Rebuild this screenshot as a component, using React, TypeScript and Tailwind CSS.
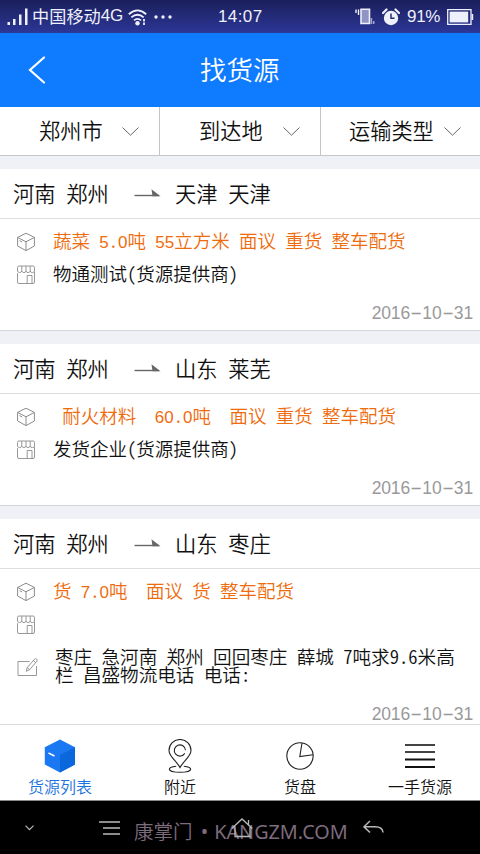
import type { ReactNode } from 'react';

type Shipment = {
  from: string;
  to: string;
  goods: string;
  company: string;
  note?: string;
  date: string;
};

const filters = [
  { label: '郑州市', className: 'w-[160px] pl-[39px] gap-[19px] border-r' },
  { label: '到达地', className: 'w-[161px] pl-[39px] gap-[20px] border-r' },
  { label: '运输类型', className: 'flex-1 pl-[28px] gap-[10px]' },
];

const shipments: Shipment[] = [
  {
    from: '河南 郑州',
    to: '天津 天津',
    goods: '蔬菜 5.0吨 55立方米 面议 重货 整车配货',
    company: '物通测试(货源提供商)',
    date: '2016-10-31',
  },
  {
    from: '河南 郑州',
    to: '山东 莱芜',
    goods: ' 耐火材料  60.0吨  面议 重货 整车配货',
    company: '发货企业(货源提供商)',
    date: '2016-10-31',
  },
  {
    from: '河南 郑州',
    to: '山东 枣庄',
    goods: '货 7.0吨  面议 货 整车配货',
    company: '',
    note: '枣庄 急河南 郑州 回回枣庄 薛城 7吨求9.6米高\n栏 昌盛物流电话 电话:',
    date: '2016-10-31',
  },
];

const BoxIcon = () => (
  <svg width="20" height="20" viewBox="0 0 20 20" fill="none" stroke="#8c8c8c" strokeWidth="1" strokeLinejoin="round">
    <path d="M10 1.2 18.4 5.4V14L10 18.6 1.6 14V5.4ZM1.6 5.4 10 9.8 18.4 5.4M10 9.8V18.6" />
    <path d="M3.6 8.6 6.2 10" />
  </svg>
);

const ShopIcon = () => (
  <svg width="20" height="20" viewBox="0 0 20 20" fill="none" stroke="#8c8c8c" strokeWidth="0.9">
    <path d="M1.5 8.2V17Q1.5 18.5 3 18.5H17Q18.5 18.5 18.5 17V7" />
    <path d="M1.5 6V2.5Q1.5 1 3 1H17Q18.5 1 18.5 2.5V6" />
    <path d="M1.5 6Q2 7.6 3.6 7.6T5.8 6Q6.2 7.6 7.9 7.6T10 6Q10.4 7.6 12.1 7.6T14.2 6Q14.6 7.6 16.4 7.6T18.5 6M5.8 6V1M10 6V1M14.2 6V1" />
    <path d="M11.2 18.5V10.5H16V18.5" />
  </svg>
);

const EditIcon = () => (
  <svg width="22" height="20" viewBox="0 0 22 20" fill="none" stroke="#8c8c8c" strokeWidth="0.9" strokeLinejoin="round">
    <path d="M12.5 4.5H1V18.5H19.5V9" />
    <path d="M9.3 14.3 10.2 10.6 17.7 2Q18.6 1.1 19.6 2T20 4.2L12.7 12.6ZM16.4 3.5 18.8 5.7M10.2 10.6 12.7 12.6" />
  </svg>
);

const ArrowIcon = () => (
  <svg className="-mt-[2px]" width="27" height="10" viewBox="0 0 27 10" fill="none">
    <path d="M0.5 7.5H25" stroke="#666" strokeWidth="1.4" />
    <path d="M17.5 1.2 26.5 8.2H18.5Z" fill="#666" />
  </svg>
);

const StatusBar = () => (
  <div className="flex h-[33px] shrink-0 items-center bg-linear-to-b from-[#1b1f5c] to-[#2c3797] pl-[7px] font-normal text-[#eef0fb]">
    <svg width="21" height="17" viewBox="0 0 21 17" fill="currentColor">
      <path d="M0.5 14h2.5v3H0.5zM6 11h2.5v6H6zM12 6.5h2.5V17H12zM18 0.5h2.5V17H18z" />
    </svg>
    <span className="ml-[4px] flex w-[91px] items-center whitespace-nowrap pb-[2px] text-[17.2px] leading-none">
      中国移动
      <span className="font-['Liberation_Sans',sans-serif] text-[17px] tracking-[-0.3px]">4G</span>
    </span>
    <svg className="ml-[5px] mt-[1px]" width="19" height="17" viewBox="0 0 19 17" fill="none" stroke="currentColor" strokeWidth="1.8">
      <path d="M0.8 5.2Q9.5-2.4 18.2 5.2M3.3 8.4Q9.5 3 15.7 8.4M6 11.4Q9.5 8.4 13 11.4" />
      <circle cx="9.5" cy="14.2" r="2.2" fill="currentColor" stroke="none" />
      <path d="M16 10v2.4M16 13.6V16" />
    </svg>
    <svg className="ml-[7px]" width="18" height="4" viewBox="0 0 18 4" fill="currentColor">
      <circle cx="2" cy="2" r="1.7" />
      <circle cx="9" cy="2" r="1.7" />
      <circle cx="16" cy="2" r="1.7" />
    </svg>
    <span className="ml-[46px] w-[46px] font-['Liberation_Sans',sans-serif] text-[17px] leading-none tracking-[0.4px]">14:07</span>
    <svg className="ml-[91px]" width="20" height="17" viewBox="0 0 20 17" fill="none" stroke="currentColor">
      <path d="M1 1.5V5M3.5 1.5V7" strokeWidth="1.4" />
      <path d="M6 1.2H14.5V15.5H6Z" fill="#8f94c4" strokeWidth="1.6" />
      <path d="M16.4 10V16M18.7 13V16" stroke="#9ea3d0" strokeWidth="1.6" />
    </svg>
    <svg className="ml-[7px]" width="18" height="18" viewBox="0 0 18 18" fill="none">
      <circle cx="9" cy="10" r="7.2" fill="currentColor" />
      <path d="M1 5 4.5 1.5M17 5 13.5 1.5" stroke="currentColor" strokeWidth="2.2" strokeLinecap="round" />
      <path d="M9 5.5V10.3H12.5" stroke="#262c7c" strokeWidth="1.5" />
    </svg>
    <span className="ml-[7px] w-[34px] whitespace-nowrap pb-[1px] font-['Liberation_Sans',sans-serif] text-[17px] leading-none tracking-[-0.3px]">91%</span>
    <svg className="ml-[6px]" width="27" height="16" viewBox="0 0 27 16" fill="none">
      <path d="M0.7 0.7H24V15.3H0.7Z" stroke="currentColor" strokeWidth="1.3" />
      <path d="M2.6 2.6H21.2V13.4H2.6Z" fill="currentColor" />
      <path d="M25.4 5V11" stroke="currentColor" strokeWidth="1.6" />
    </svg>
  </div>
);

const DateText = ({ value }: { value: string }) => (
  <span className="flex font-['Liberation_Sans',sans-serif] text-[17.5px] leading-none text-[#999]">
    {value.split('').map((char, i) =>
      char === '-' ? (
        <span key={i} className="w-[12.3px] scale-x-[2.1] text-center">-</span>
      ) : (
        <span key={i} className="w-[9.6px]">{char}</span>
      )
    )}
  </span>
);

// digits are set in the latin face, everything else keeps the half-width CJK grid
const Mixed = ({ text }: { text: string }) => (
  <>
    {text.split(/(\d+)/).map((part, i) =>
      /^\d+$/.test(part) ? (
        <span key={i} className="font-['Liberation_Sans',sans-serif] text-[17px]">{part}</span>
      ) : (
        part
      )
    )}
  </>
);

const InfoRow = ({ icon, className, children }: { icon: ReactNode; className?: string; children?: ReactNode }) => (
  <div className="flex h-[33px] items-center gap-[17px] pl-[16px]">
    {icon}
    <span className={`whitespace-pre pb-[2px] text-[18.5px] leading-none ${className ?? ''}`}>{children}</span>
  </div>
);

const ShipmentCard = ({ item }: { item: Shipment }) => (
  <section className="shrink-0 border-b border-[#d4d4d8] bg-white">
    <div className="flex h-[50px] items-center border-b border-[#dedede] pl-[13px] text-[21.3px] leading-none">
      <span className="w-[121px] pb-[2px]">{item.from}</span>
      <ArrowIcon />
      <span className="ml-[14px] pb-[2px]">{item.to}</span>
    </div>
    <div className="pt-[6px]">
      <InfoRow icon={<BoxIcon />} className="text-[#ee6c0e]">
        <Mixed text={item.goods} />
      </InfoRow>
      <InfoRow icon={<ShopIcon />}>{item.company}</InfoRow>
      {item.note && (
        <div className="flex h-[51px] items-center gap-[16px] pl-[17px]">
          <EditIcon />
          <p className="whitespace-pre pb-[3px] text-[18.6px] leading-[18.5px]">{item.note}</p>
        </div>
      )}
      <div className="flex h-[39px] items-end justify-end pb-[8px] pr-[7px]">
        <DateText value={item.date} />
      </div>
    </div>
  </section>
);

const tabs = [
  {
    label: '货源列表',
    icon: (
      <svg width="32" height="34" viewBox="0 0 32 34">
        <path d="M16 .5 31 8.2V25.5L16 33.5.8 25.5V8.2Z" fill="#1a78f2" />
        <path d="M16 16V33.5L31 25.5V8.2Z" fill="#0b67dc" />
        <path d="M4.5 14 10.5 17" stroke="#fff" strokeWidth="1.4" />
      </svg>
    ),
  },
  {
    label: '附近',
    icon: (
      <svg width="24" height="34" viewBox="0 0 24 34" fill="none" stroke="#222" strokeWidth="1.1">
        <path d="M12 28.5C9 22.5 1 17.5 1 11.5A11 11 0 0 1 23 11.5C23 17.5 15 22.5 12 28.5Z" />
        <path d="M16.8 14.2A5.6 5.6 0 1 1 17.5 11.2" />
        <path d="M8.2 27.3C3.5 27.8 1.3 29 1.3 30.3 1.3 32 6 33.3 12 33.3S22.7 32 22.7 30.3C22.7 29 20.5 27.8 15.8 27.3" />
      </svg>
    ),
  },
  {
    label: '货盘',
    icon: (
      <svg width="28" height="34" viewBox="0 0 28 34" fill="none" stroke="#222" strokeWidth="1.1">
        <circle cx="14" cy="17" r="13.2" />
        <path d="M16 4 13.8 17.5 27 15.7" />
      </svg>
    ),
  },
  {
    label: '一手货源',
    icon: (
      <svg width="30" height="34" viewBox="0 0 30 34" fill="none" strokeWidth="2">
        <path d="M0 6H30M0 13H30" stroke="#444" />
        <path d="M0 20.5H30M0 28H30" stroke="#111" />
      </svg>
    ),
  },
];

const SystemBar = () => (
  <div className="relative flex h-[53px] shrink-0 items-center bg-black text-[#b9b9bb]">
    <span className="absolute left-[134px] top-[21px] whitespace-nowrap font-['Noto_Sans','Noto_Sans_CJK_SC',sans-serif] text-[19.5px] leading-[20px] text-[#7d6b7e] [font-feature-settings:normal]">
      康掌门
      <span className="ml-[2px] text-[19.8px] font-normal [word-spacing:1px]"> • KANGZM.COM</span>
    </span>
    <svg className="ml-[25px]" width="9" height="6" viewBox="0 0 9 6" fill="none" stroke="currentColor" strokeWidth="1.2">
      <path d="M.5.7 4.5 4.7 8.5.7" />
    </svg>
    <svg className="ml-[65px]" width="21" height="14" viewBox="0 0 21 14" fill="none" stroke="currentColor" strokeWidth="1.3">
      <path d="M0 1H21M4 7H21M4 13H21" />
    </svg>
    <svg className="relative ml-[111px]" width="22" height="20" viewBox="0 0 22 20" fill="none" stroke="currentColor" strokeWidth="1.3">
      <path d="M.8 10.5 11 1 21.2 10.5M4 8.5V18.5H19V8.5M17.5 2V7" />
    </svg>
    <svg className="ml-[110px] -mt-[1px]" width="21" height="14" viewBox="0 0 21 14" fill="none" stroke="currentColor" strokeWidth="1.5">
      <path d="M7 1 1 6.8 7 12.5M1 6.8H12Q19.5 6.8 20 12.5" />
    </svg>
  </div>
);

export default function App() {
  return (
    <div className="flex h-[854px] w-[480px] flex-col overflow-hidden bg-[#eff1f6] font-['Noto_Sans_CJK_SC',sans-serif] font-[350] text-[#111] [font-feature-settings:'hwid']">
      <StatusBar />
      <header className="flex h-[74px] shrink-0 items-center bg-[#0f7bff] pl-[28px] text-white">
        <svg width="18" height="28" viewBox="0 0 18 28" fill="none" stroke="currentColor" strokeWidth="2.2" strokeLinecap="round">
          <path d="M16 1.5 2 14 16 26.5" />
        </svg>
        <h1 className="ml-[154px] pb-[2px] text-[26.5px] font-[350] leading-none">找货源</h1>
      </header>

      <div className="mb-[13px] flex h-[49px] shrink-0 border-b border-[#c6c6c8] bg-white">
        {filters.map((filter) => (
          <button key={filter.label} className={`flex items-center border-[#c6c6c8] text-[21.2px] leading-none ${filter.className}`}>
            <span className="whitespace-nowrap pb-[2px]">{filter.label}</span>
            <svg className="shrink-0" width="17" height="9" viewBox="0 0 17 9" fill="none" stroke="#666" strokeWidth="1">
              <path d="M.5.5 8.5 8.2 16.5.5" />
            </svg>
          </button>
        ))}
      </div>

      <main className="flex h-[555px] shrink-0 flex-col gap-[13px] overflow-hidden">
        {shipments.map((item, i) => (
          <ShipmentCard key={i} item={item} />
        ))}
      </main>

      <nav className="flex h-[77px] shrink-0 border-b border-t border-b-[#8a8a8a] border-t-[#dadada] bg-white">
        {tabs.map((tab, i) => (
          <div key={tab.label} className={`flex w-[120px] flex-col items-center pt-[14px] text-[16px] leading-none ${i === 0 ? 'text-[#1a72e0]' : ''}`}>
            {tab.icon}
            <span className="mt-[5px]">{tab.label}</span>
          </div>
        ))}
      </nav>
      <SystemBar />
    </div>
  );
}
